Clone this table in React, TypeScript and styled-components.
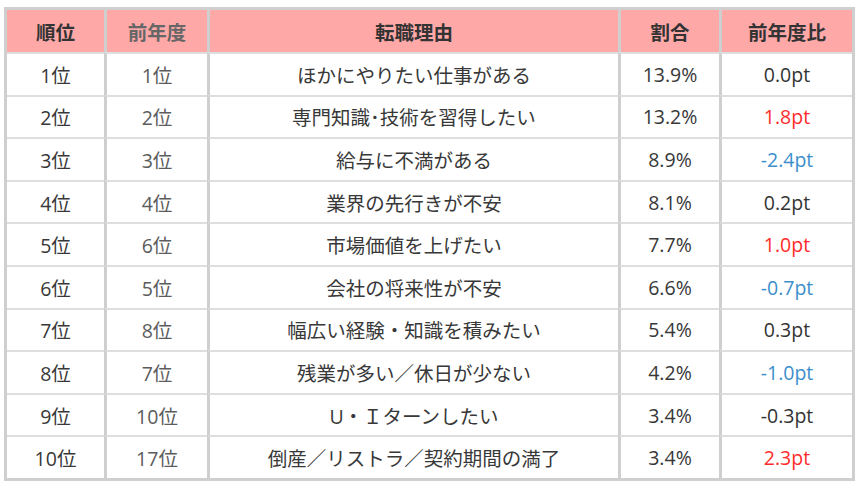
import React from "react";
import styled, { createGlobalStyle } from "styled-components";

const GlobalStyle = createGlobalStyle`
  html, body {
    margin: 0;
    padding: 0;
    background: #ffffff;
  }
  body {
    font-family: "Open Sans", "Noto Sans CJK JP", sans-serif;
  }
`;

type Trend = "up" | "down" | "flat";

interface Row {
  rank: string;
  prev: string;
  reason: string;
  rate: string;
  diff: string;
  trend: Trend;
}

const rows: Row[] = [
  { rank: "1位", prev: "1位", reason: "ほかにやりたい仕事がある", rate: "13.9%", diff: "0.0pt", trend: "flat" },
  { rank: "2位", prev: "2位", reason: "専門知識･技術を習得したい", rate: "13.2%", diff: "1.8pt", trend: "up" },
  { rank: "3位", prev: "3位", reason: "給与に不満がある", rate: "8.9%", diff: "-2.4pt", trend: "down" },
  { rank: "4位", prev: "4位", reason: "業界の先行きが不安", rate: "8.1%", diff: "0.2pt", trend: "flat" },
  { rank: "5位", prev: "6位", reason: "市場価値を上げたい", rate: "7.7%", diff: "1.0pt", trend: "up" },
  { rank: "6位", prev: "5位", reason: "会社の将来性が不安", rate: "6.6%", diff: "-0.7pt", trend: "down" },
  { rank: "7位", prev: "8位", reason: "幅広い経験・知識を積みたい", rate: "5.4%", diff: "0.3pt", trend: "flat" },
  { rank: "8位", prev: "7位", reason: "残業が多い／休日が少ない", rate: "4.2%", diff: "-1.0pt", trend: "down" },
  { rank: "9位", prev: "10位", reason: "U・Ｉターンしたい", rate: "3.4%", diff: "-0.3pt", trend: "flat" },
  { rank: "10位", prev: "17位", reason: "倒産／リストラ／契約期間の満了", rate: "3.4%", diff: "2.3pt", trend: "up" },
];

const trendColor: Record<Trend, string> = {
  up: "#ff2b2b",
  down: "#3d8fcc",
  flat: "#333333",
};

const Page = styled.div`
  padding: 7px 4px 0 4px;
`;

const Table = styled.table`
  width: 851px;
  border-collapse: separate;
  border-spacing: 0;
  border: 3px solid #cfcfcf;
  table-layout: fixed;
`;

const HeadCell = styled.th<{ $muted?: boolean }>`
  height: 42px;
  padding: 0;
  background: #ffa8a8;
  color: ${(p) => (p.$muted ? "#666666" : "#333333")};
  font-size: 19.5px;
  font-weight: bold;
  text-align: center;
  vertical-align: middle;
  border-left: 3px solid #cfcfcf;
  &:first-child {
    border-left: none;
  }
`;

const Cell = styled.td<{ $color?: string }>`
  height: 40.6px;
  padding: 0;
  color: ${(p) => p.$color ?? "#383838"};
  font-size: 19.5px;
  text-align: center;
  vertical-align: middle;
  border-top: 2px solid #dedede;
  border-left: 3px solid #cfcfcf;
  &:first-child {
    border-left: none;
  }
`;

export default function App() {
  return (
    <Page>
      <GlobalStyle />
      <Table>
        <colgroup>
          <col style={{ width: 97 }} />
          <col style={{ width: 103 }} />
          <col style={{ width: 411 }} />
          <col style={{ width: 101 }} />
          <col style={{ width: 133 }} />
        </colgroup>
        <thead>
          <tr>
            <HeadCell>順位</HeadCell>
            <HeadCell $muted>前年度</HeadCell>
            <HeadCell>転職理由</HeadCell>
            <HeadCell>割合</HeadCell>
            <HeadCell>前年度比</HeadCell>
          </tr>
        </thead>
        <tbody>
          {rows.map((r) => (
            <tr key={r.rank}>
              <Cell>{r.rank}</Cell>
              <Cell $color="#5c5c5c">{r.prev}</Cell>
              <Cell>{r.reason}</Cell>
              <Cell>{r.rate}</Cell>
              <Cell $color={trendColor[r.trend]}>{r.diff}</Cell>
            </tr>
          ))}
        </tbody>
      </Table>
    </Page>
  );
}
